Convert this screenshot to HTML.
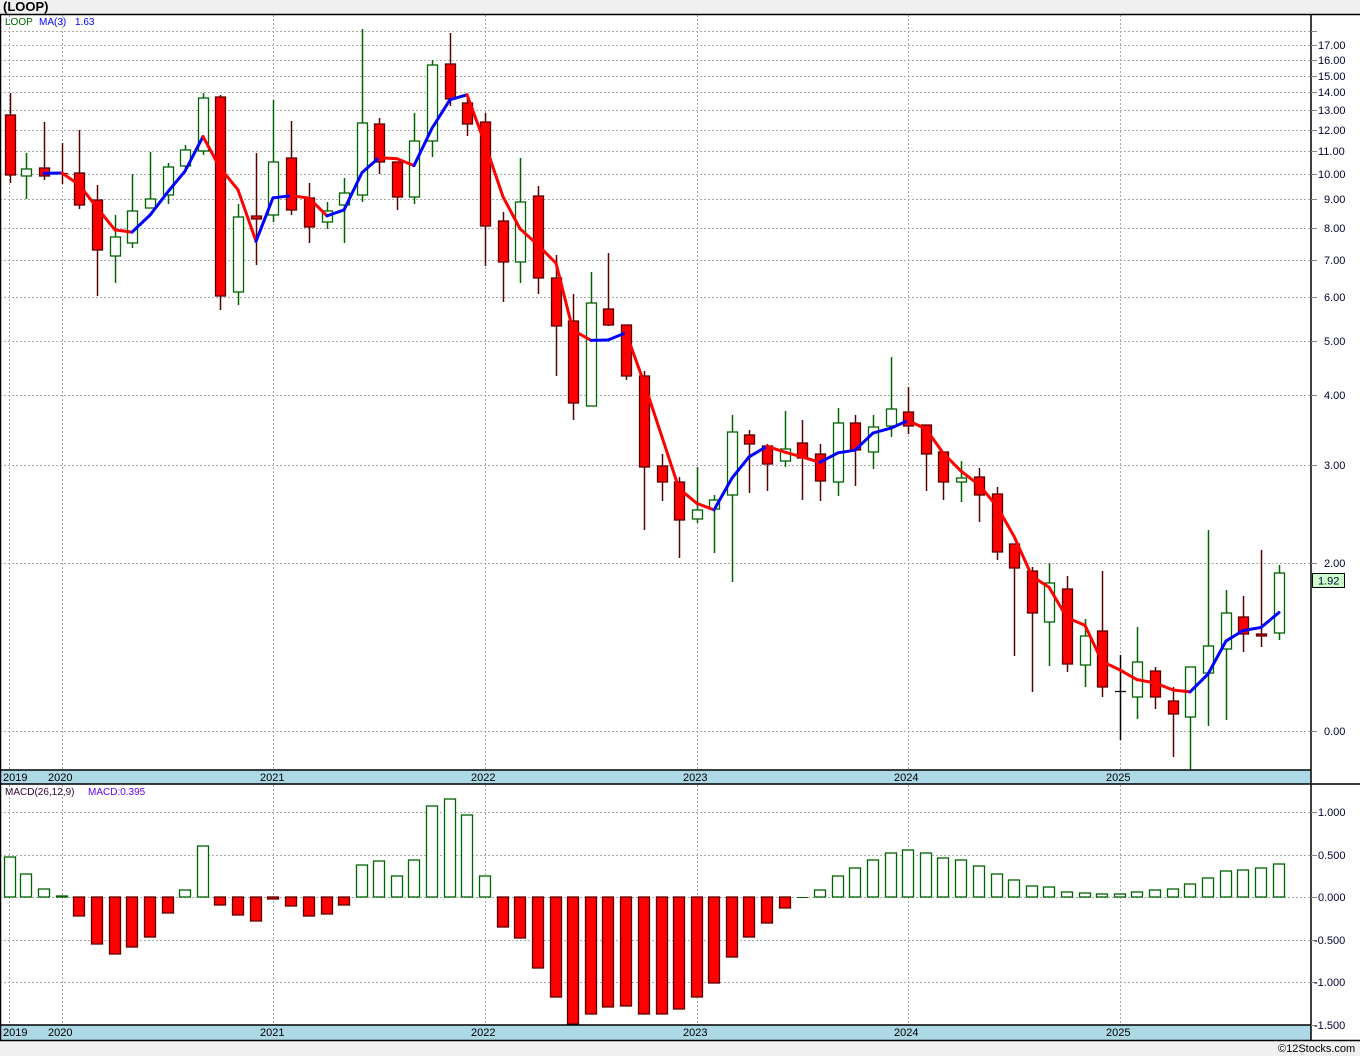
<!DOCTYPE html>
<html><head><meta charset="utf-8">
<style>
html,body{margin:0;padding:0;background:#f0f0f0;}
body{width:1360px;height:1056px;position:relative;overflow:hidden;font-family:"Liberation Sans",sans-serif;}
svg{position:absolute;left:0;top:0;}
</style></head><body>
<svg id="s" width="1360" height="1056" xmlns="http://www.w3.org/2000/svg" font-family="Liberation Sans, DejaVu Sans, sans-serif">
<rect x="0" y="14" width="1360" height="1027" fill="#fff"/>
<g id="grid" stroke="#aaa" stroke-dasharray="2,2" stroke-width="1"></g>
<rect x="0" y="770" width="1311" height="14" fill="#add8e6"/>
<rect x="0" y="1025" width="1311" height="15" fill="#add8e6"/>
<g id="plot"></g>
<g stroke="#000" stroke-width="1.5" fill="none">
<line x1="0" y1="14.5" x2="1360" y2="14.5"/>
<line x1="0" y1="770" x2="1311" y2="770"/>
<line x1="0" y1="784" x2="1360" y2="784"/>
<line x1="0" y1="1025" x2="1311" y2="1025"/>
<line x1="0" y1="1040.5" x2="1360" y2="1040.5"/>
<line x1="1311" y1="14" x2="1311" y2="1041"/>
<line x1="0.5" y1="14" x2="0.5" y2="1041"/>
</g>
<g id="ticks" stroke="#888" stroke-width="1"></g>
<text x="3" y="11" font-size="13" font-weight="bold" fill="#000">(LOOP)</text>
<text x="5" y="25" font-size="10" fill="#006400">LOOP</text>
<text x="39" y="25" font-size="10" fill="#0000ff">MA(3)</text>
<text x="75" y="25" font-size="10" fill="#0000ff">1.63</text>
<text x="5" y="795" font-size="10" fill="#330033">MACD(26,12,9)</text>
<text x="88" y="795" font-size="10" fill="#6600ff">MACD:0.395</text>
<g font-size="11" fill="#000">
<text x="3" y="781">2019</text><text x="48" y="781">2020</text><text x="260" y="781">2021</text><text x="471" y="781">2022</text><text x="683" y="781">2023</text><text x="894" y="781">2024</text><text x="1106" y="781">2025</text>
<text x="3" y="1036">2019</text><text x="48" y="1036">2020</text><text x="260" y="1036">2021</text><text x="471" y="1036">2022</text><text x="683" y="1036">2023</text><text x="894" y="1036">2024</text><text x="1106" y="1036">2025</text>
</g>
<g font-size="11" fill="#000033">
<text x="1318" y="49">17.00</text><text x="1318" y="64">16.00</text><text x="1318" y="80">15.00</text><text x="1318" y="96">14.00</text><text x="1318" y="114">13.00</text><text x="1318" y="134">12.00</text><text x="1318" y="155">11.00</text><text x="1318" y="178">10.00</text><text x="1324" y="203">9.00</text><text x="1324" y="232">8.00</text><text x="1324" y="264">7.00</text><text x="1324" y="301">6.00</text><text x="1324" y="345">5.00</text><text x="1324" y="399">4.00</text><text x="1324" y="469">3.00</text><text x="1324" y="567">2.00</text><text x="1324" y="735">0.00</text>
<text x="1318" y="816">1.000</text><text x="1318" y="859">0.500</text><text x="1318" y="901">0.000</text><text x="1314" y="944">-0.500</text><text x="1314" y="986">-1.000</text><text x="1314" y="1029">-1.500</text>
</g>
<rect x="1312.5" y="573.5" width="32" height="14" fill="#ccffcc" stroke="#000"/>
<text x="1318" y="584.5" font-size="11" fill="#000033">1.92</text>
<text x="1278" y="1052" font-size="11" fill="#000">©12Stocks.com</text>
</svg>
<script>
var NS="http://www.w3.org/2000/svg";
function el(p,t,a){var e=document.createElementNS(NS,t);for(var k in a)e.setAttribute(k,a[k]);p.appendChild(e);return e;}
var grid=document.getElementById('grid'),plot=document.getElementById('plot'),ticks=document.getElementById('ticks');
[31,45,60,76,92,110,130,151,174,199,228,260,297,341,395,465,563,731].forEach(function(y){el(grid,'line',{x1:0,y1:y+.5,x2:1311,y2:y+.5});el(ticks,'line',{x1:1311,y1:y+.5,x2:1317,y2:y+.5});});
[812,855,897,940,982,1025].forEach(function(y){if(y<1025)el(grid,'line',{x1:0,y1:y+.5,x2:1311,y2:y+.5});el(ticks,'line',{x1:1311,y1:y+.5,x2:1317,y2:y+.5});});
[9,62,273,485,697,908,1120].forEach(function(x){el(grid,'line',{x1:x+.5,y1:15,x2:x+.5,y2:770});el(grid,'line',{x1:x+.5,y1:785,x2:x+.5,y2:1025});});
var C=[[10,93,115,175,183,0],[26,153,169,176,199,1],[44,122,168,176,180,0],[62,143,173,174,184,3],[79,130,173,205,209,0],[97,185,200,250,296,0],[115,215,237,256,283,1],[132,174,211,243,248,1],[150,152,199,208,208,1],[168,163,167,195,204,1],[185,145,150,166,169,1],[203,93,98,151,155,1],[220,95,97,296,310,0],[238,204,217,292,305,1],[256,153,216,219,265,0],[273,100,162,215,222,1],[291,121,158,210,215,0],[309,183,198,227,243,0],[327,202,211,222,229,1],
[344,178,193,205,243,1],[362,29,123,195,202,1],[379,118,124,162,174,0],[397,162,162,197,210,0],[414,113,141,197,204,1],[432,60,65,141,157,1],[450,33,64,99,106,0],[467,96,103,124,136,0],[485,113,122,226,266,0],[503,212,221,262,302,0],[520,158,202,262,283,1],[538,186,196,278,294,0],[556,255,278,326,376,0],[573,294,321,403,420,0],[591,272,303,406,406,1],[608,253,309,325,326,0],[626,325,325,376,380,0],
[644,371,376,467,530,0],[662,454,466,482,501,0],[679,477,482,520,558,0],[697,467,510,519,523,1],[714,495,500,509,553,1],[732,415,432,495,582,1],[749,430,435,444,493,0],[767,444,446,464,491,0],[785,411,449,461,467,1],[802,420,443,458,500,0],[820,444,454,481,501,0],[838,408,423,482,496,1],[855,415,423,450,486,0],[873,415,427,452,469,1],[891,357,409,426,437,1],[908,387,412,426,434,0],[926,425,425,454,491,0],[943,452,452,482,500,0],[961,461,478,482,502,1],[979,468,477,495,522,0],[997,487,494,552,560,0],
[1014,544,544,568,656,0],[1032,567,571,613,692,0],[1049,563,583,622,666,1],[1067,576,589,664,672,0],[1085,619,636,665,687,1],[1102,571,631,687,697,0],[1120,655,691,691,740,2],[1137,627,662,697,719,1],[1155,667,671,697,709,0],[1173,687,701,714,757,0],[1190,667,667,717,770,1],[1208,530,646,673,726,1],[1226,590,613,649,720,1],[1243,596,617,634,652,0],[1261,550,634,636,647,0],[1279,565,573,633,640,1]];
function P(y){return 2*Math.exp((563-y)/242);}
function Y(p){return 563-242*Math.log(p/2);}
var closes=C.map(function(c){return c[5]==1?P(c[2]):P(c[3]);});
var ma=[];for(var i=2;i<C.length;i++){ma.push([C[i][0],Y((closes[i]+closes[i-1]+closes[i-2])/3)]);}
C.forEach(function(c){
 var x=c[0],up=c[5];
 var col=up==1?'#006400':(up==2?'#000':'#5a0000');
 el(plot,'line',{x1:x+.5,y1:c[1],x2:x+.5,y2:c[4],stroke:col,'stroke-width':1.5});
 if(up>=2){el(plot,'line',{x1:x-5,y1:c[2]+.5,x2:x+6,y2:c[2]+.5,stroke:col,'stroke-width':1.2});return;}
 var h=Math.max(c[3]-c[2],2);
 el(plot,'rect',{x:x-4.5,y:c[2],width:10,height:h,fill:up?'#fff':'#ff0000',stroke:col,'stroke-width':1.3});
});
for(var i=1;i<ma.length;i++){
 var a=ma[i-1],b=ma[i];
 el(plot,'line',{x1:a[0],y1:a[1],x2:b[0],y2:b[1],stroke:b[1]<a[1]?'#0000ff':'#ff0000','stroke-width':3,'stroke-linecap':'round'});
}
var M=[857,874,889,896,916,944,954,947,937,913,890,846,905,915,921,899,906,916,914,905,865,861,876,860,806,799,815,876,927,938,968,997,1024,1014,1007,1006,1014,1014,1009,997,983,957,937,923,908,897,890,876,868,860,853,850,853,858,860,866,874,880,886,887,892,893,894,894,892,890,889,884,878,871,870,868,864];
M.forEach(function(y,i){
 var x=C[i][0];
 if(y<897){el(plot,'rect',{x:x-5.5,y:y,width:11,height:897-y,fill:'#fff',stroke:'#006400','stroke-width':1.3});}
 else if(y>897){el(plot,'rect',{x:x-5.5,y:897,width:11,height:y-897,fill:'#ff0000',stroke:'#5a0000','stroke-width':1.3});}
 else {el(plot,'line',{x1:x-5,y1:897.5,x2:x+6,y2:897.5,stroke:'#006400'});}
});
</script>
</body></html>
